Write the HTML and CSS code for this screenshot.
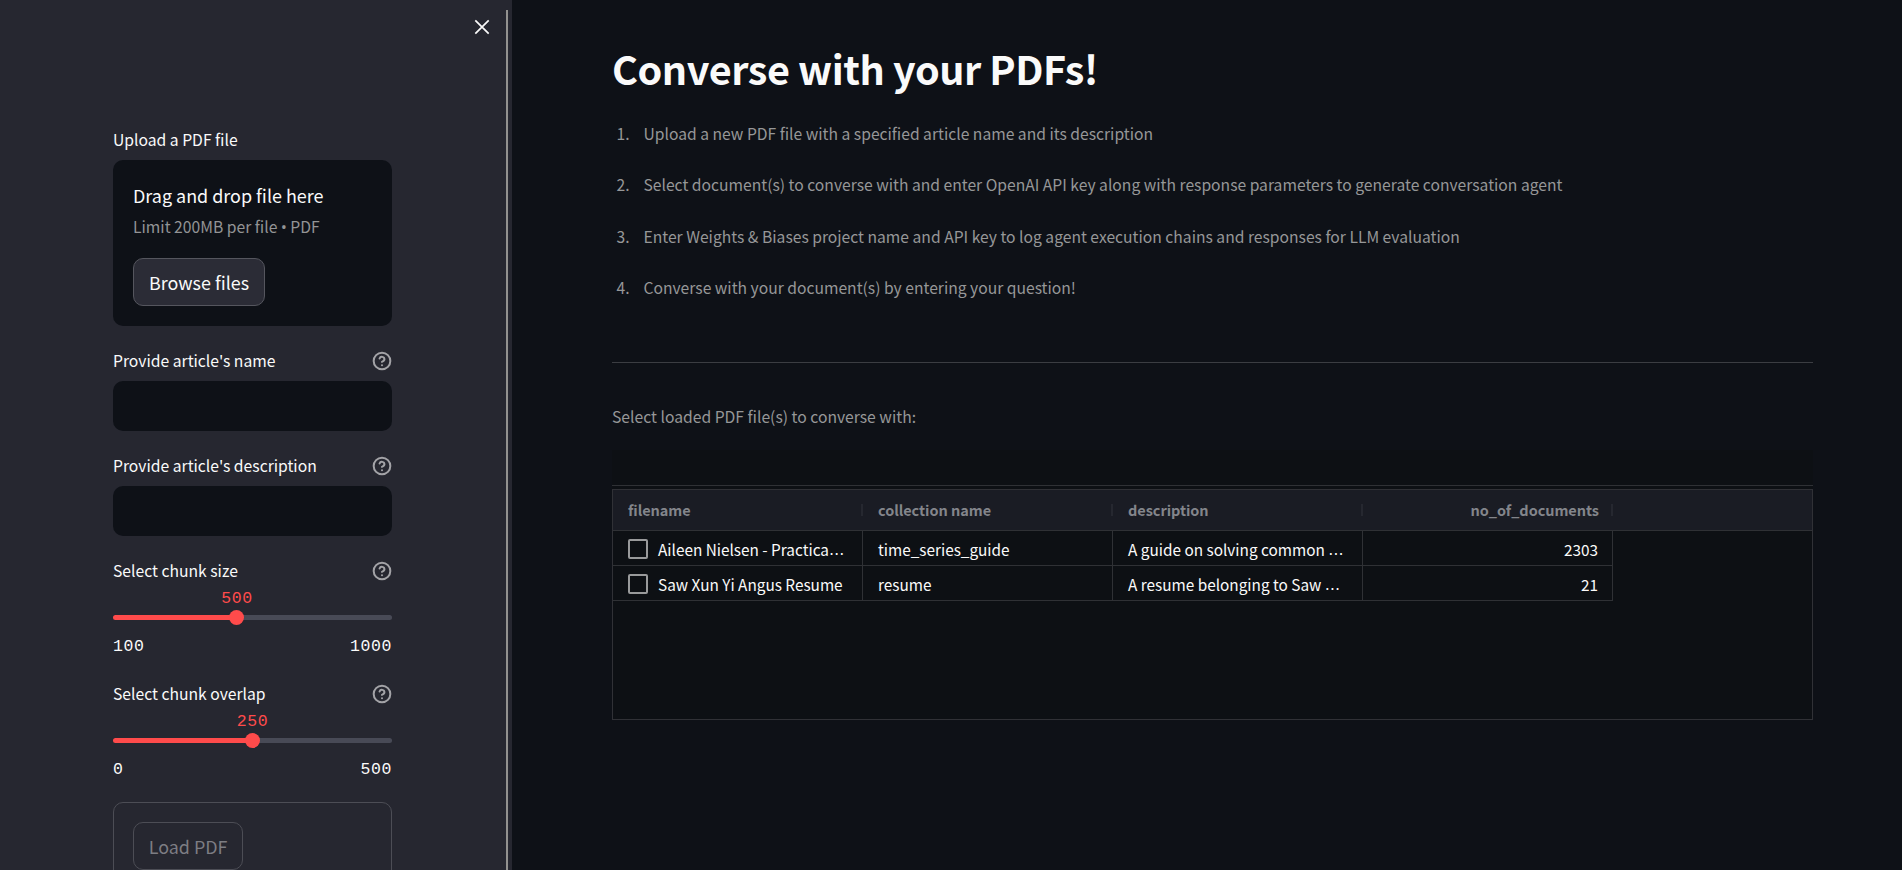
FILE: index.html
```
<!DOCTYPE html>
<html lang="en">
<head>
<meta charset="utf-8">
<title>Converse with your PDFs!</title>
<link rel="stylesheet" href="styles.css">
</head>
<body>
<svg class="defs" width="0" height="0">
  <symbol id="help" viewBox="0 0 24 24">
    <circle cx="12" cy="12" r="10"/>
    <path d="M9.09 9a3 3 0 0 1 5.83 1c0 2-3 3-3 3"/>
    <path d="M12 17h.01"/>
  </symbol>
</svg>
<div class="app">
  <aside class="sidebar">
    <button class="close" aria-label="Close"><svg viewBox="0 0 16 16"><path d="M1.3 1.3l13.4 13.4M14.7 1.3L1.3 14.7"/></svg></button>
    <div class="scrollbar"></div>

    <section class="widget">
      <div class="label"><span>Upload a PDF file</span></div>
      <div class="dropzone">
        <div class="drop-title">Drag and drop file here</div>
        <div class="drop-limit">Limit 200MB per file <span class="dot">•</span> PDF</div>
        <button class="btn">Browse files</button>
      </div>
    </section>

    <section class="widget">
      <div class="label"><span>Provide article's name</span><svg class="help"><use href="#help"/></svg></div>
      <div class="input"></div>
    </section>

    <section class="widget">
      <div class="label"><span>Provide article's description</span><svg class="help"><use href="#help"/></svg></div>
      <div class="input"></div>
    </section>

    <section class="widget">
      <div class="label tight"><span>Select chunk size</span><svg class="help"><use href="#help"/></svg></div>
      <div class="slider" style="--value: 44.44%">
        <div class="track"><div class="thumb"><span class="value">500</span></div></div>
        <div class="range"><span>100</span><span>1000</span></div>
      </div>
    </section>

    <section class="widget">
      <div class="label tight"><span>Select chunk overlap</span><svg class="help"><use href="#help"/></svg></div>
      <div class="slider" style="--value: 50%">
        <div class="track"><div class="thumb"><span class="value">250</span></div></div>
        <div class="range"><span>0</span><span>500</span></div>
      </div>
    </section>

    <div class="form"><button class="btn disabled">Load PDF</button></div>
  </aside>

  <main class="main">
    <h1>Converse with your PDFs!</h1>
    <ol class="steps">
      <li><span class="num">1.</span>Upload a new PDF file with a specified article name and its description</li>
      <li><span class="num">2.</span>Select document(s) to converse with and enter OpenAI API key along with response parameters to generate conversation agent</li>
      <li><span class="num">3.</span>Enter Weights &amp; Biases project name and API key to log agent execution chains and responses for LLM evaluation</li>
      <li><span class="num">4.</span>Converse with your document(s) by entering your question!</li>
    </ol>
    <hr>
    <p class="prompt">Select loaded PDF file(s) to converse with:</p>
    <div class="frame">
      <div class="toolbar"></div>
      <div class="grid">
        <div class="row head">
          <div class="cell">filename</div><div class="cell">collection name</div><div class="cell">description</div><div class="cell right">no_of_documents</div>
        </div>
        <div class="row">
          <div class="cell"><i class="check"></i>Aileen Nielsen - Practica<span class="ell">…</span></div><div class="cell">time_series_guide</div><div class="cell">A guide on solving common <span class="ell">…</span></div><div class="cell right">2303</div>
        </div>
        <div class="row">
          <div class="cell"><i class="check"></i>Saw Xun Yi Angus Resume</div><div class="cell">resume</div><div class="cell">A resume belonging to Saw <span class="ell">…</span></div><div class="cell right">21</div>
        </div>
      </div>
    </div>
  </main>
</div>
</body>
</html>
```
FILE: styles.css
```
* { box-sizing: border-box; }

body {
  margin: 0;
  background: #0e1117;
  color: #fafafa;
  font-family: "Noto Sans CJK SC", "Noto Sans", sans-serif;
  font-size: 15.7px;
  line-height: 28px;
}

button { font: inherit; color: inherit; }

.defs { position: absolute; }

.app {
  display: flex;
  height: 870px;
  overflow: hidden;
}

/* Sidebar */
.sidebar {
  position: relative;
  flex: none;
  width: 512px;
  height: 870px;
  padding: 125px 120px 0 113px;
  background: #262730;
  overflow: hidden;
  display: flex;
  flex-direction: column;
  gap: 20px;
}

.widget { flex: none; }

.close {
  position: absolute;
  top: 18.5px;
  left: 473.5px;
  width: 16px;
  height: 16px;
  padding: 0;
  border: 0;
  background: none;
}

.close svg {
  display: block;
  width: 16px;
  height: 16px;
  stroke: #fafafa;
  stroke-width: 1.7;
  fill: none;
}

.scrollbar {
  position: absolute;
  top: 10px;
  right: 4px;
  bottom: 0;
  width: 2px;
  background: #92918f;
}

.label {
  display: flex;
  justify-content: space-between;
  height: 28px;
  margin-bottom: 7px;
  line-height: 30px;
}

.label.tight { margin-bottom: 0; }

.help {
  width: 20px;
  height: 20px;
  margin-top: 5px;
  fill: none;
  stroke: #a3a3a7;
  stroke-width: 2.4;
  stroke-linecap: round;
  stroke-linejoin: round;
}

.dropzone {
  height: 166px;
  padding: 20px;
  border-radius: 10px;
  background: #0e1117;
}

.drop-title {
  height: 32px;
  font-size: 17.95px;
  line-height: 30px;
}

.drop-limit {
  height: 28px;
  margin-bottom: 18px;
  color: #939495;
  line-height: 30px;
}

.dot {
  font-family: "Open Sans", sans-serif;
  font-size: 16.5px;
  line-height: 1;
  margin: 0 -0.2px;
}

.btn {
  display: block;
  height: 48px;
  padding: 0 15px;
  border: 1px solid #55565e;
  border-radius: 10px;
  background: #2b2c36;
  font-size: 17.9px;
  line-height: 46px;
  white-space: nowrap;
}

.btn.disabled {
  padding: 0 14.7px;
  background: none;
  border-color: #4c4d55;
  color: #7d7d83;
}

.input {
  height: 50px;
  border-radius: 10px;
  background: #0e1117;
}

.slider {
  height: 75px;
  padding-top: 31px;
  font-family: "Liberation Mono", monospace;
  font-size: 16.5px;
  letter-spacing: 0.6px;
}

.track {
  position: relative;
  height: 5px;
  border-radius: 3px;
  background: linear-gradient(to right, #ff4b4b var(--value), #484a56 var(--value));
}

.thumb {
  position: absolute;
  top: -5px;
  left: calc(var(--value) - 7.5px);
  width: 15px;
  height: 15px;
  border-radius: 50%;
  background: #ff4b4b;
}

.value {
  position: absolute;
  bottom: 12px;
  left: 50%;
  transform: translateX(-50%);
  color: #ff4b4b;
}

.range {
  display: flex;
  justify-content: space-between;
  padding-top: 13px;
}

.form {
  flex: none;
  height: 120px;
  padding: 19px;
  border: 1px solid #4c4d55;
  border-radius: 10px;
}

/* Main column */
.main {
  flex: none;
  width: 1301px;
  padding: 41px 0 0 100px;
}

h1 {
  margin: 0;
  font-size: 39.6px;
  line-height: 54px;
  letter-spacing: -0.45px;
}

.steps {
  margin: 25px 0 0;
  padding: 0;
  list-style: none;
  display: flex;
  flex-direction: column;
  gap: 23.4px;
  color: #969798;
}

.steps li {
  display: flex;
  font-size: 15.67px;
  white-space: nowrap;
}

.num { width: 31.5px; padding-left: 4.5px; }

hr {
  height: 1px;
  margin: 60px 0 40px;
  border: 0;
  background: #3b3d42;
}

.prompt {
  margin: 0 0 19px;
  color: #969798;
}

.frame { background: #0d1014; }

.toolbar {
  height: 36px;
  border-bottom: 1px solid #2f3135;
  margin-bottom: 3px;
}

.grid {
  height: 231px;
  border: 1px solid #303136;
}

.row {
  display: flex;
  width: 1000px;
  height: 35px;
  font-size: 15.35px;
  line-height: 34px;
}

.cell {
  display: flex;
  align-items: center;
  width: 250px;
  padding: 1px 14px 0 15px;
  border-right: 1px solid #2f3135;
  border-bottom: 1px solid #2f3135;
  white-space: pre;
}

.right { justify-content: flex-end; }

.head {
  width: 100%;
  height: 41px;
  background: #1a1c24;
  border-bottom: 1px solid #2f3135;
  color: #83858b;
  font-size: 14.5px;
  font-weight: 700;
  line-height: 40px;
  letter-spacing: -0.05px;
}

.head .cell {
  padding-top: 0;
  border: 0;
  background: linear-gradient(#262830, #262830) right 14px / 2px 12px no-repeat;
}

.ell {
  padding-top: 2px;
  font-family: "DejaVu Sans", sans-serif;
}

.check {
  flex: none;
  width: 20px;
  height: 20px;
  margin-right: 10px;
  border: 2px solid #999a9b;
  border-radius: 2px;
}
```
